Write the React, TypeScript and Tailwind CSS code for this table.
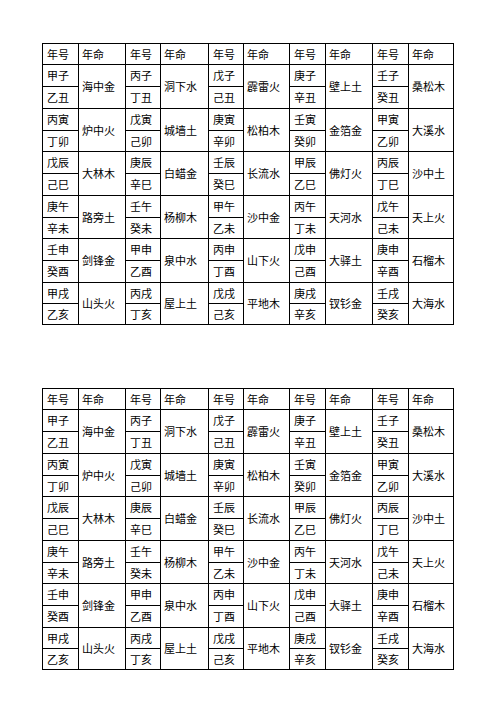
import React from "react";

const groups: [string, string, string][][] = [
  [["甲子","乙丑","海中金"],["丙子","丁丑","洞下水"],["戊子","己丑","霹雷火"],["庚子","辛丑","壁上土"],["壬子","癸丑","桑松木"]],
  [["丙寅","丁卯","炉中火"],["戊寅","己卯","城墙土"],["庚寅","辛卯","松柏木"],["壬寅","癸卯","金箔金"],["甲寅","乙卯","大溪水"]],
  [["戊辰","己巳","大林木"],["庚辰","辛巳","白蜡金"],["壬辰","癸巳","长流水"],["甲辰","乙巳","佛灯火"],["丙辰","丁巳","沙中土"]],
  [["庚午","辛未","路旁土"],["壬午","癸未","杨柳木"],["甲午","乙未","沙中金"],["丙午","丁未","天河水"],["戊午","己未","天上火"]],
  [["壬申","癸酉","剑锋金"],["甲申","乙酉","泉中水"],["丙申","丁酉","山下火"],["戊申","己酉","大驿土"],["庚申","辛酉","石榴木"]],
  [["甲戌","乙亥","山头火"],["丙戌","丁亥","屋上土"],["戊戌","己亥","平地木"],["庚戌","辛亥","钗钐金"],["壬戌","癸亥","大海水"]],
];

const cell = "bg-white flex items-center text-[11px] leading-none text-black";

function Table() {
  const items: React.ReactNode[] = [];
  for (let c = 0; c < 5; c++) {
    items.push(
      <div key={`h${c}a`} className={`${cell} pl-[4px]`}>年号</div>,
      <div key={`h${c}b`} className={`${cell} pl-[3px]`}>年命</div>
    );
  }
  groups.forEach((g, gi) => {
    g.forEach((e, ci) => {
      items.push(
        <div key={`${gi}-${ci}-a`} className={`${cell} pl-[4px]`}>{e[0]}</div>,
        <div key={`${gi}-${ci}-n`} className={`${cell} pl-[3px] row-span-2`}>{e[2]}</div>
      );
    });
    g.forEach((e, ci) => {
      items.push(
        <div key={`${gi}-${ci}-b`} className={`${cell} pl-[4px]`}>{e[1]}</div>
      );
    });
  });
  return (
    <div className="grid w-[412px] gap-px bg-black p-px font-['Noto_Sans_CJK_SC','Noto_Sans',sans-serif] grid-cols-[35px_46px_34px_47px_34px_45px_35px_46px_35px_44px] grid-rows-[20px_21px_21px_21px_20px_21px_21px_21px_20px_21px_21px_20px_20px]">
      {items}
    </div>
  );
}

export default function App() {
  return (
    <div className="w-[496px] h-[702px] bg-white pt-[43px] pl-[42px] flex flex-col gap-[63px]">
      <Table />
      <Table />
    </div>
  );
}
